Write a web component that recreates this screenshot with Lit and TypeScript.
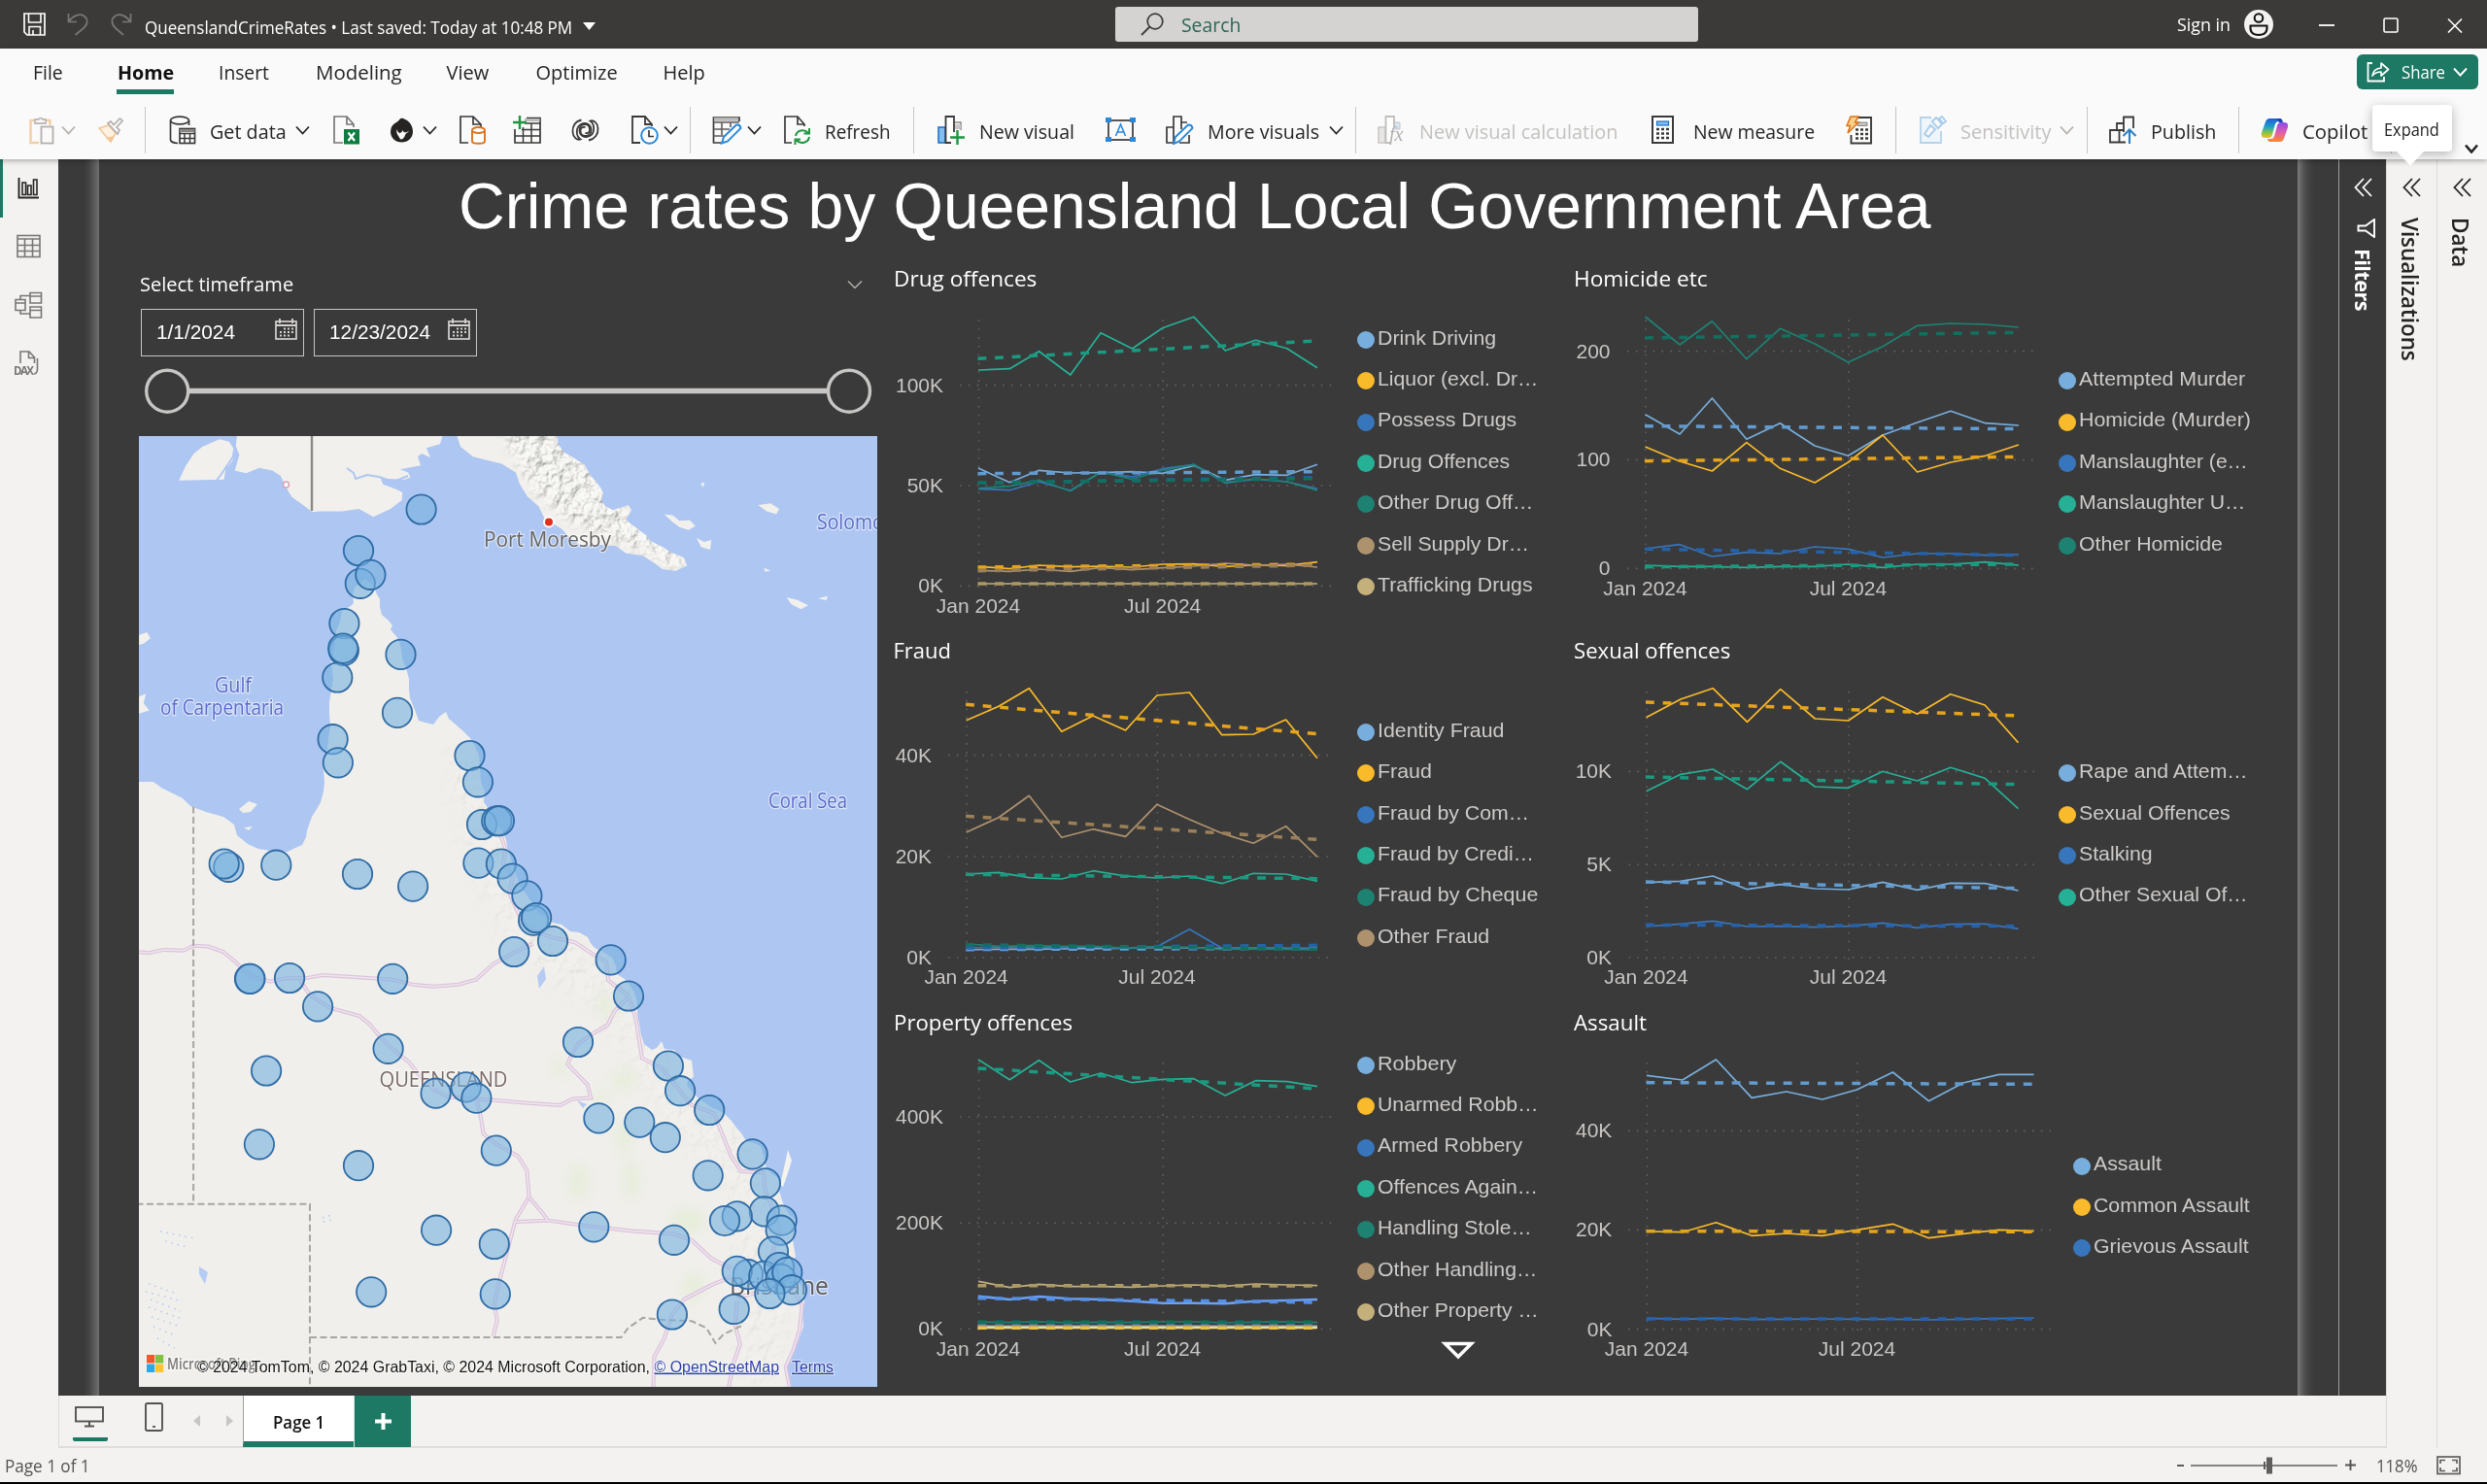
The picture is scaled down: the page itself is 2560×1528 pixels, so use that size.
import { LitElement, html, css, svg, nothing } from "lit";
import { customElement, property } from "lit/decorators.js";

/* One line of text condensed or widened to a set width. */
@customElement("fit-text")
class FitText extends LitElement {
  @property({ type: Number }) w = 0;
  @property() text = "";
  static styles = css`
    :host { display: inline-block; white-space: nowrap; }
    .inner { display: inline-block; transform-origin: 0 50%; }
  `;
  updated() {
    const el = this.renderRoot.querySelector(".inner") as HTMLElement;
    el.style.transform = "none";
    const n = el.offsetWidth;
    if (n && this.w) {
      this.style.width = this.w + "px";
      el.style.transform = `scaleX(${this.w / n})`;
    }
  }
  render() {
    return html`<span class="inner">${this.text}</span>`;
  }
}

const t = (text: string, w: number, cls = "") => html`<fit-text class=${cls} .w=${w} text=${text}></fit-text>`;
const ic = (w: number, h: number, body: unknown, cls = "ic") =>
  html`<svg class=${cls} width=${w} height=${h} viewBox="0 0 ${w} ${h}" fill="none">${body}</svg>`;

/* ---------- icons ---------- */
const K = "#3b3a39";
const chev = (c = "#252423", w = 15, sw = 1.8) =>
  ic(w, 10, svg`<path d="M1 1.5L${w / 2} 8.5L${w - 1} 1.5" stroke=${c} stroke-width=${sw}/>`);
const sep = html`<span class="sep"></span>`;
const docPath = "M9 28H1V1H14L22 9V12M14 1V9H22";

const icons = {
  paste: ic(27, 30, svg`<path d="M6 5H1.5V28H10M17 5h4.500v5" stroke="#f3cfa6" stroke-width="2.500"/><path d="M6 8V4h3.500a2.500 2.500 0 0 1 4.500 0H17v4Z" stroke="#bebbb8" stroke-width="1.800"/><rect x="12.500" y="11.500" width="12" height="17" stroke="#b3b0ad" stroke-width="1.800"/>`),
  brush: ic(27, 27, svg`<path d="M2 11L12 8 19 16 14 25Z" fill="#fdf1e2" stroke="#f1c797" stroke-width="1.600"/><path d="M9 21L14 25 17 19Z" fill="#f5c791"/><path d="M11 6L21 17 23 13 20 10 26 3.500 23.500 1 17 7.500 14 4Z" fill="#fafafa" stroke="#b3b0ad" stroke-width="1.700"/>`),
  getData: ic(28, 30, svg`<ellipse cx="11" cy="5" rx="9.500" ry="3.800" stroke=${K} stroke-width="1.700"/><path d="M1.500 5V25Q2 28 9 28.500M20.500 5V10" stroke=${K} stroke-width="1.700"/><rect x="11" y="13.500" width="15.500" height="15" fill="#fff" stroke=${K} stroke-width="1.700"/><path d="M11 15.500H26.500" stroke="#8a8886" stroke-width="3"/><path d="M11 18.500H26.500M11 23.500H26.500M16 18.500V28.500M21.500 18.500V28.500" stroke=${K} stroke-width="1.500"/>`),
  excel: ic(28, 30, svg`<path d="M10 28H1V1H14L21 9V12M14 1V9H21" stroke="#7a7876" stroke-width="1.700"/><rect x="11" y="14" width="16" height="15.500" fill="#107c41"/><path d="M15.500 17.500L22 26M22 17.500L15.500 26" stroke="#fff" stroke-width="2.200"/>`),
  lake: ic(25, 26, svg`<path d="M14 1C10 0 11 3 7 5Q1 8 1 14.500C1 21 6 25.500 12.500 25.500S24 21 24 14.500C24 8 20 3 14 1Z" fill="#252423"/><path d="M7.500 12C6.500 17 9 18 10.500 21.500 11.500 24 15 22 16 18 17 15.500 19 16 20 13.500 18 16 14 16 13.500 13 11.500 18 8.500 16 7.500 12Z" fill="#fafafa"/>`),
  sql: ic(28, 30, svg`<path d=${docPath} stroke=${K} stroke-width="1.700"/><path d="M13 15V26.500C13 29.500 26 29.500 26 26.500V15" fill="#fff" stroke="#d8731f" stroke-width="1.900"/><ellipse cx="19.500" cy="15" rx="6.500" ry="3" fill="#fff" stroke="#d8731f" stroke-width="1.900"/>`),
  table: ic(30, 30, svg`<path d="M14 2.500H28V28H2V14" stroke=${K} stroke-width="1.700"/><path d="M12 4.500H27.500" stroke="#bdbbb9" stroke-width="3"/><path d="M12 8H28M9 14.500H28M2 21H28M10.500 12V28M19 8V28" stroke=${K} stroke-width="1.500"/><path d="M7 0V14M0 7H14" stroke="#1d9641" stroke-width="2.400"/>`),
  dataverse: ic(29, 24, svg`<path d="M10.500 1.500C4 3 1 8 1.500 14S6 22.500 9.500 21.500C4.500 18 4.500 9 10 6 15 3.500 20.500 6 20.500 12 20.500 16 17.500 18 14.500 18S9.500 15.500 9.500 12.500 11.500 8.500 14.500 9" stroke=${K} stroke-width="1.800"/><path d="M18 22.500C24.500 21 28 16 27.500 10S23 1.500 19.500 2.500C24.500 6 24.500 15 19 18 14 20.500 8.500 18 8.500 12 8.500 8 11.500 6 14.500 6S19 8.500 19 11.500 17.500 15.500 14.500 15" stroke=${K} stroke-width="1.800"/>`),
  recent: ic(28, 30, svg`<path d="M9 28H1V1H14L21 9V11M14 1V9H21" stroke=${K} stroke-width="1.800"/><circle cx="18.500" cy="20.500" r="8.300" fill="#fff" stroke="#2b88d8" stroke-width="2"/><path d="M18 15V21.500H23" stroke=${K} stroke-width="1.700"/>`),
  transform: ic(31, 30, svg`<path d="M28 6V2H1.500V28H9" stroke=${K} stroke-width="1.700"/><path d="M2 4H27" stroke="#bdbbb9" stroke-width="3.600"/><path d="M1.500 7H28M1.500 14H18M1.500 21H12M10 7V20M19 7V12" stroke="#605e5c" stroke-width="1.600"/><path d="M10 28.500L12 22 25 9.500Q29 9 29.500 13L16 26.500Z" fill="#fff" stroke="#2b88d8" stroke-width="2"/>`),
  refresh: ic(28, 30, svg`<path d="M8 28H1V1H14L21 9V11M14 1V9H21" stroke=${K} stroke-width="1.700"/><path d="M12 21C13 15 21 13.500 25 18M26 13V18.500H20.500M26 22C25 28 17 30 13 25.500M11.500 30V24.500H17" stroke="#1d9641" stroke-width="2"/>`),
  newVisual: ic(29, 30, svg`<rect x="1" y="12" width="7" height="16" fill="#83beec" stroke="#1b6ec2" stroke-width="1.500"/><path d="M18 7H24V15" stroke="#8a8886" stroke-width="1.500"/><path d="M18 9h6v5H18Z" fill="#c8c6c4"/><path d="M17 17V1H8.500V28H14" fill="#fff" stroke=${K} stroke-width="1.800"/><path d="M20.500 15V30M13 22.500H28" stroke="#1d9641" stroke-width="2.400"/>`),
  textBox: ic(31, 26, svg`<rect x="3" y="3" width="25" height="20" stroke=${K} stroke-width="1.700"/><path d="M0 0h6v5H0ZM25 0h6v5H25ZM0 20h6v5H0ZM25 20h6v5H25Z" fill="#2b88d8"/><path d="M10.500 19L15.500 7 20.500 19M12.500 15H18.500" stroke="#2b88d8" stroke-width="1.600"/>`),
  moreVisuals: ic(30, 30, svg`<path d="M8 12H1V28H8M8 28V1H16V14M16 7H22M24 20V28H14" stroke=${K} stroke-width="1.700"/><path d="M8 29L10 22 23 9.500Q27 9.500 27.500 13L14 26.500Z" fill="#fff" stroke="#2b88d8" stroke-width="2"/>`),
  calcVisual: ic(28, 30, svg`<rect x="1" y="12" width="7" height="16" fill="#e8e6e4" stroke="#c8c6c4" stroke-width="1.500"/><path d="M17 7H23V14H17Z" fill="#d3e6f6" stroke="#c8c6c4"/><path d="M17 12V1H8.500V28H13" fill="#fff" stroke="#c0bebb" stroke-width="1.800"/><text x="12" y="26" font-family="Liberation Serif, serif" font-style="italic" font-size="20" fill="#b3b0ad">fx</text>`),
  calc: ic(23, 30, svg`<rect x="1" y="1" width="21" height="27" fill="#fff" stroke=${K} stroke-width="2"/><rect x="5.500" y="6" width="12" height="4" fill="#83beec" stroke="#1b6ec2" stroke-width="1.200"/><path d="M5 14h3M10 14h3M15 14h3M5 18.500h3M10 18.500h3M15 18.500h3M5 23h3M10 23h3M15 23h3" stroke=${K} stroke-width="2.600"/>`),
  quick: ic(28, 30, svg`<path d="M12 2H26V28.500H5.500V20" fill="#fff" stroke=${K} stroke-width="1.900"/><path d="M12 7h10v3.500H12Z" fill="#c8c6c4" stroke="#8a8886"/><path d="M10 14.500h3M15 14.500h3M20 14.500h3M10 19h3M15 19h3M20 19h3M10 23.500h3M15 23.500h3M20 23.500h3" stroke=${K} stroke-width="2.600"/><path d="M5 1H13L9.500 7H13L2 18 4.500 10.500H1Z" fill="#fbd18a" stroke="#d8731f" stroke-width="1.500"/>`),
  sens: ic(28, 30, svg`<path d="M12 2H1V28H22V16" fill="#eef5fb" stroke="#b5d3ea" stroke-width="1.800"/><path d="M5 19L11 10 16 14 9 22ZM13 6L17 2 23 9 19 13ZM20 3L23 1 27 6 24 8Z" fill="#fafafa" stroke="#a9cdea" stroke-width="1.900"/>`),
  publish: ic(29, 30, svg`<path d="M8 15V8H15M15 12V1.500H25V13M8 15H1V27.500H17M8 15H15M15 8V17M10.500 15V27.500M1 15V27" stroke=${K} stroke-width="1.800"/><path d="M21 29V15M14.500 21L21 14.500 27.500 21" stroke="#2b7fc4" stroke-width="2.100"/>`),
  share: ic(24, 24, svg`<path d="M6 3H1.500V21.500H18V17" stroke="#fff" stroke-width="1.800"/><path d="M6 16Q7 8.500 15 8V3L22.500 9.500 15 16V12Q9 12 6 16Z" stroke="#fff" stroke-width="1.700" stroke-linejoin="round"/>`),
};
const copilot = html`<svg class="ic" width="29" height="26" viewBox="0 0 29 26">
  <defs>
    <linearGradient id="ca" x1="0" y1="0" x2="0" y2="1"><stop offset="0" stop-color="#1f5bd8"/><stop offset=".45" stop-color="#1fa3c9"/><stop offset=".75" stop-color="#8fc53a"/><stop offset="1" stop-color="#f6c21c"/></linearGradient>
    <linearGradient id="cb" x1="0" y1="0" x2="0" y2="1"><stop offset="0" stop-color="#8a4bea"/><stop offset=".5" stop-color="#e05bb0"/><stop offset="1" stop-color="#fb8a2c"/></linearGradient>
  </defs>
  <path d="M20 1H9.500Q6 1 5 4.500L1.200 15Q-.5 21 5 21H8.500Q11 21 12 17.500L15 6.500Q16 4 18 4H22Q21.500 1 20 1Z" fill="url(#ca)"/>
  <path d="M9 25H19.500Q23 25 24 21.500L27.700 11Q29.500 5 24 5H20.500Q18 5 17 8.500L14 19.500Q13 22 11 22H7Q7.500 25 9 25Z" fill="url(#cb)"/>
  <path d="M16 1H20Q22 1 23 5H19Z" fill="#1b46b8"/></svg>`;

const dbl = (c: string) => ic(20, 20, svg`<path d="M10 1L1.500 10 10 19M18 1L9.500 10 18 19" stroke=${c} stroke-width="1.800"/>`);
const calendar = ic(23, 22, svg`<rect x="1" y="3" width="21" height="18" stroke="#d5d3d1" stroke-width="1.700"/><path d="M5 0V5M18 0V5M1 7H22" stroke="#d5d3d1" stroke-width="1.900"/><path d="M9 10.500h2M13 10.500h2M17 10.500h2M5 14h2M9 14h2M13 14h2M17 14h2M5 17.500h2M9 17.500h2M13 17.500h2" stroke="#d5d3d1" stroke-width="2"/>`);

/* ---------- chart data ---------- */
const C = { light: "#78aedd", yellow: "#f9ba2b", blue: "#3776bd", teal: "#26b196", dteal: "#1d8272", tan: "#ae926e", khaki: "#c4b07b", bright: "#6ba0f5", gold: "#f7d97a" };
const D: Record<string, string> = { [C.light]: "#629bd0", [C.yellow]: "#e6a41c", [C.blue]: "#2562ab", [C.teal]: "#1a9a80", [C.dteal]: "#12705f", [C.tan]: "#9b7f58", [C.khaki]: "#ad9a62", [C.bright]: "#5590e6", [C.gold]: "#e9c24e" };
type Series = { c: string; v: number[] | number; tr: [number, number]; lw?: number };
interface ChartSpec {
  title: string; tw: number; ox: number; oy: number; pw: number; base: number;
  x0: number; x1: number; gx: [number, number]; rows: [number, string][]; lx: number;
  v: [number, number]; xl: number; series: Series[]; legend: [string, string, number][]; more?: boolean;
}
const DAYS = [0, 31, 60, 91, 121, 152, 182, 213, 244, 274, 305, 335];

const charts: ChartSpec[] = [
  { title: "Drug offences", tw: 147, ox: 919, oy: 308, pw: 478, base: 250, x0: 1007, x1: 1356, gx: [988, 1371], lx: 971,
    rows: [[440, "100K"], [750, "50K"], [1060, "0K"]], v: [238, 1065], xl: 630.5,
    series: [
      { c: C.light, v: [696, 740, 703, 711, 710, 707, 712, 688, 733, 716, 718, 685], tr: [713, 707] },
      { c: C.yellow, v: [1000, 1007, 996, 1001, 999, 1002, 993, 992, 1000, 995, 997, 986], tr: [1002, 993] },
      { c: C.blue, v: [760, 764, 738, 765, 709, 723, 698, 685, 742, 730, 738, 760], tr: [742, 725] },
      { c: C.teal, v: [393, 389, 335, 408, 278, 327, 263, 229, 333, 301, 326, 386], tr: [358, 303] },
      { c: C.dteal, v: [758, 752, 733, 767, 708, 730, 703, 685, 740, 729, 738, 765], tr: [741, 728] },
      { c: C.tan, v: [1012, 1015, 1008, 1015, 1003, 1010, 1004, 999, 990, 996, 993, 1002], tr: [1013, 996] },
      { c: C.khaki, v: 1053, tr: [1053, 1053] },
    ],
    legend: [["Drink Driving", C.light, 122], ["Liquor (excl. Dr…", C.yellow, 165], ["Possess Drugs", C.blue, 143], ["Drug Offences", C.teal, 136], ["Other Drug Off…", C.dteal, 160], ["Sell Supply Dr…", C.tan, 156], ["Trafficking Drugs", C.khaki, 160]] },
  { title: "Homicide etc", tw: 138, ox: 1619, oy: 308, pw: 500, base: 250, x0: 1693.5, x1: 2078, gx: [1675, 2093], lx: 1657.5,
    rows: [[335, "200"], [670, "100"], [1006, "0"]], v: [238, 1010], xl: 613,
    series: [
      { c: C.light, v: [530, 591, 480, 607, 557, 627, 658, 594, 555, 520, 557, 564], tr: [566, 575] },
      { c: C.yellow, v: [630, 675, 705, 617, 697, 741, 678, 594, 708, 678, 658, 624], tr: [674, 661] },
      { c: C.blue, v: [945, 932, 969, 956, 960, 939, 946, 972, 960, 960, 965, 963], tr: [946, 965] },
      { c: C.teal, v: [996, 1000, 1000, 1003, 1000, 1000, 993, 1003, 993, 993, 986, 996], tr: [1001, 993] },
      { c: C.dteal, v: [228, 315, 242, 359, 265, 312, 369, 320, 256, 249, 252, 261], tr: [294, 277] },
    ],
    legend: [["Attempted Murder", C.light, 171], ["Homicide (Murder)", C.yellow, 177], ["Manslaughter (e…", C.blue, 174], ["Manslaughter U…", C.teal, 171], ["Other Homicide", C.dteal, 148]] },
  { title: "Fraud", tw: 60, ox: 919, oy: 691, pw: 478, base: 640, x0: 994.6, x1: 1356, gx: [976, 1367], lx: 959,
    rows: [[413, "40K"], [726, "20K"], [1038, "0K"]], v: [216, 1043], xl: 1012.7,
    series: [
      { c: C.light, v: [1014, 1012, 1012, 1011, 1010, 1009, 1006, 1008, 1010, 1009, 1010, 1012], tr: [1013, 1009] },
      { c: C.yellow, v: [305, 262, 206, 340, 291, 336, 228, 219, 350, 348, 303, 422], tr: [256, 347] },
      { c: C.blue, v: [1008, 1005, 1006, 1006, 1005, 1010, 1004, 950, 1009, 1008, 1009, 1008], tr: [1008, 1000] },
      { c: C.teal, v: [780, 775, 791, 795, 770, 786, 792, 786, 809, 778, 780, 802], tr: [781, 794] },
      { c: C.dteal, v: [996, 1003, 1001, 1003, 1003, 1008, 1004, 1006, 1013, 1010, 1012, 1014], tr: [998, 1012] },
      { c: C.tan, v: [651, 605, 538, 667, 641, 664, 565, 611, 654, 685, 632, 727], tr: [601, 673] },
    ],
    legend: [["Identity Fraud", C.light, 130], ["Fraud", C.yellow, 56], ["Fraud by Com…", C.blue, 156], ["Fraud by Credi…", C.teal, 161], ["Fraud by Cheque", C.dteal, 165], ["Other Fraud", C.tan, 115]] },
  { title: "Sexual offences", tw: 161, ox: 1619, oy: 691, pw: 500, base: 640, x0: 1694.5, x1: 2077.5, gx: [1676.6, 2094], lx: 1659,
    rows: [[463, "10K"], [751, "5K"], [1038, "0K"]], v: [216, 1043], xl: 1012.7,
    series: [
      { c: C.light, v: [806, 802, 786, 827, 812, 825, 828, 805, 829, 808, 809, 831], tr: [804, 824] },
      { c: C.yellow, v: [296, 240, 206, 310, 209, 300, 306, 233, 286, 224, 258, 374], tr: [249, 291] },
      { c: C.blue, v: [942, 934, 925, 942, 941, 944, 941, 931, 946, 935, 934, 949], tr: [937, 941] },
      { c: C.teal, v: [524, 472, 456, 518, 433, 510, 514, 463, 492, 451, 484, 578], tr: [480, 503] },
    ],
    legend: [["Rape and Attem…", C.light, 174], ["Sexual Offences", C.yellow, 156], ["Stalking", C.blue, 76], ["Other Sexual Of…", C.teal, 174]] },
  { title: "Property offences", tw: 184, ox: 919, oy: 1074, pw: 478, base: 1020, x0: 1007, x1: 1356, gx: [988, 1371], lx: 971, more: true,
    rows: [[390, "400K"], [718, "200K"], [1045, "0K"]], v: [222, 1050], xl: 1396,
    series: [
      { c: C.light, v: 1036, tr: [1036, 1036] },
      { c: C.tan, v: 1040, tr: [1039, 1039] },
      { c: C.teal, v: [213, 275, 215, 282, 255, 284, 274, 272, 324, 278, 281, 296], tr: [240, 303] },
      { c: C.dteal, v: [1024, 1025, 1023, 1026, 1024, 1025, 1023, 1023, 1026, 1024, 1023, 1025], tr: [1024, 1024] },
      { c: C.khaki, v: [898, 917, 907, 914, 914, 916, 912, 909, 913, 906, 909, 911], tr: [911, 912] },
      { c: C.bright, v: [944, 954, 945, 952, 954, 959, 965, 965, 967, 959, 957, 954], tr: [950, 963], lw: 2.6 },
      { c: C.gold, v: 1041, tr: [1042, 1042], lw: 2.6 },
    ],
    legend: [["Robbery", C.light, 81], ["Unarmed Robb…", C.yellow, 165], ["Armed Robbery", C.blue, 149], ["Offences Again…", C.teal, 165], ["Handling Stole…", C.dteal, 159], ["Other Handling…", C.tan, 164], ["Other Property …", C.khaki, 166]] },
  { title: "Assault", tw: 75, ox: 1619, oy: 1074, pw: 515, base: 1020, x0: 1695, x1: 2093.5, gx: [1676, 2111], lx: 1659.4,
    rows: [[433, "40K"], [739, "20K"], [1046, "0K"]], v: [222, 1050], xl: 1396,
    series: [
      { c: C.light, v: [262, 276, 213, 331, 312, 336, 306, 252, 341, 285, 259, 259], tr: [284, 289] },
      { c: C.yellow, v: [744, 746, 716, 757, 750, 757, 739, 721, 764, 751, 739, 743], tr: [743, 745] },
      { c: C.blue, v: [1012, 1015, 1012, 1016, 1015, 1014, 1015, 1015, 1017, 1015, 1013, 1011], tr: [1014, 1014] },
    ],
    legend: [["Assault", C.light, 70], ["Common Assault", C.yellow, 161], ["Grievous Assault", C.blue, 160]] },
];

@customElement("line-chart")
class LineChart extends LitElement {
  @property({ attribute: false }) spec!: ChartSpec;
  static styles = css`
    :host { display: block; height: 383px; color: #fff; }
    .title { height: 38px; padding-left: 0.5px; font: 22px/33px "Open Sans", "Noto Sans", sans-serif; }
    .body { display: flex; height: 338px; }
    .plot { display: block; flex: none; overflow: visible; }
    .tick { font-family: "Liberation Sans", Arial, sans-serif; font-size: 21px; fill: #c8c6c4; }
    .legend { display: flex; flex-direction: column; justify-content: center; font: 21px/38px "Liberation Sans", Arial, sans-serif; color: #cdcbc9; }
    .row { display: flex; align-items: flex-start; height: 42.4px; gap: 3px; }
    .dot { width: 18px; height: 18px; border-radius: 50%; margin-top: 12.2px; }
    .more { height: 38px; padding-left: 86px; }
  `;
  render() {
    const s = this.spec;
    const Y = (v: number) => s.base + v / 3;
    const X = (i: number) => s.x0 + ((s.x1 - s.x0) * DAYS[i]) / 335;
    return html`
      <div class="title">${t(s.title, s.tw)}</div>
      <div class="body">
        <svg class="plot" width=${s.pw} height="338" viewBox="${s.ox} ${s.oy} ${s.pw} 338" fill="none">
          <g stroke="#636261" stroke-width="1.600" stroke-dasharray="1.600 7.250">
            ${s.rows.map(([y]) => svg`<path d="M${s.gx[0]} ${Y(y)}H${s.gx[1]}"/>`)}
            ${[0, 6].map((i) => svg`<path d="M${X(i) + 0.5} ${Y(s.v[0])}V${Y(s.v[1])}"/>`)}
          </g>
          ${s.rows.map(([y, l]) => svg`<text class="tick" text-anchor="end" x=${s.lx} y=${Y(y) + 7}>${l}</text>`)}
          <text class="tick" text-anchor="middle" x=${X(0)} y=${s.xl}>Jan 2024</text>
          <text class="tick" text-anchor="middle" x=${X(6)} y=${s.xl}>Jul 2024</text>
          ${s.series.map((r) => {
            const pts = DAYS.map((_, i) => `${X(i).toFixed(1)},${Y(typeof r.v === "number" ? r.v : r.v[i]).toFixed(1)}`).join(" ");
            return svg`<polyline points=${pts} stroke=${r.c} stroke-width=${r.lw ?? 1.7} stroke-linejoin="round"/>`;
          })}
          ${s.series.map((r) => svg`<path d="M${s.x0 - 0.5} ${Y(r.tr[0])}L${s.x1} ${Y(r.tr[1])}" stroke=${D[r.c]} stroke-width="3.500" stroke-dasharray="8.800 8.850"/>`)}
        </svg>
        <div class="legend">
          ${s.legend.map(([l, c, w]) => html`<div class="row"><span class="dot" style="background:${c}"></span>${t(l, w)}</div>`)}
          ${s.more ? html`<div class="more">${ic(36, 30, svg`<path d="M4.500 11.500H31.500L18 25Z" stroke="#fff" stroke-width="3.500"/>`)}</div>` : nothing}
        </div>
      </div>`;
  }
}

/* ---------- map ---------- */
const BUBBLES: [number, number][] = [
  [433.6, 524.5], [369, 567], [370.8, 600.8], [381.4, 591.8], [354.4, 642], [353.8, 669.8], [353.2, 667.6], [347.3, 697.5], [412.5, 673.9], [409, 733.9],
  [342.6, 761.2], [347.9, 785.3], [483.5, 778], [491.9, 805.3], [496, 849], [511.3, 845.2], [513.9, 845.2], [235.3, 892.8], [230.7, 889.5], [284.3, 890.7],
  [368, 900], [425.1, 912.6], [492.4, 888.6], [515.9, 889.5], [527.6, 904.6], [542.4, 922.3], [549.1, 947.6], [552.1, 945], [569, 969], [529.2, 980],
  [628.7, 988.4], [647, 1025.5], [257, 1007.8], [257.4, 1007.8], [298.1, 1007], [404.2, 1007.8], [327.1, 1036.4], [595, 1073], [399.6, 1079.8], [274.1, 1102.5],
  [448.6, 1125.7], [479.7, 1119.4], [490.4, 1130.7], [687.9, 1097.5], [700.1, 1123.2], [730.2, 1143], [616.4, 1151.4], [658.3, 1155.6], [684.8, 1171.2], [266.9, 1178.3],
  [369, 1200.2], [510.8, 1184.6], [774.6, 1188.4], [728.7, 1210.3], [787.9, 1218.3], [786.8, 1247.4], [758.8, 1252.4], [746, 1257], [804.7, 1256.6], [803.7, 1266.7],
  [449.1, 1266.7], [508.8, 1281], [611.3, 1263.4], [694, 1276.8], [796, 1288.6], [770, 1312.2], [758.8, 1308.8], [786.3, 1313.9], [802.1, 1305], [803.7, 1316.8],
  [810.3, 1310.1], [814.9, 1328.2], [792.4, 1332], [382.2, 1330.3], [509.8, 1332.4], [691.9, 1353.5], [755.7, 1348],
];
const COAST =
  "M143 1428V805L158 805 166 811 176 816 188 822 196 830 212 836 230 841 241 849 244 860 255 869 266 874 278 876 296 877 304 873 311 870 315 862 316 855 321 841 326 833 330 826 333 815 334 805 333 792 333 784 337 772 338 760 340 748 339 735 339 723 341 711 343 699 341 682 344 665 346 650 350 640 352 629 361 624 364 621 363 612 365 605 376 596 384 603 388 612 391 617 391 625 393 633 400 639 404 644 402 648 405 652 408 655 411 660 413 669 414 678 418 688 421 699 421 709 422 719 427 731 431 742 438 744 446 746 452 738 459 733 462 740 469 746 476 752 484 760 489 768 493 778 494 792 495 805 499 815 498 826 505 836 510 848 517 855 521 865 523 877 526 884 528 893 533 906 537 914 543 923 549 931 554 940 562 944 569 950 578 952 587 959 596 960 605 965 608 971 612 976 621 980 630 986 634 994 635 1003 643 1008 648 1014 653 1022 656 1033 656 1044 658 1054 660 1066 663 1075 671 1081 676 1079 681 1072 684 1080 694 1081 700 1088 712 1092 713 1100 714 1109 708 1112 707 1117 712 1124 719 1131 732 1140 745 1146 752 1153 758 1161 764 1168 768 1175 776 1177 783 1180 786 1190 788 1201 794 1208 801 1213 802 1226 806 1239 812 1250 819 1256 817 1266 816 1277 819 1294 814 1300 816 1306 821 1318 827 1328 828 1340 826 1352 827 1366 823 1377 819 1387 813 1398 809 1408 810 1418 813 1428Z";
const PNG_MTN = "M800 700L808 735 830 760 880 778 905 800 912 830 925 860 945 885 955 915 985 942 1000 965 1022 985 1045 982 1080 985 1098 1003 1128 1010 1150 1030 1162 1044 1185 1048 1205 1035 1200 1015 1175 1000 1165 990 1140 972 1135 960 1112 935 1098 920 1108 895 1102 882 1075 895 1062 885 1055 870 1058 850 1052 835 1035 805 1025 780 1005 762 990 750 980 730 975 700Z";
const PNG_WEST = "M412 700L414 735 420 755 412 795 432 802 455 788 478 795 492 808 502 838 512 862 530 880 548 900 560 898 600 898 630 892 655 912 685 892 705 870 706 850 695 842 672 830 668 815 710 818 720 812 716 800 702 792 738 782 733 760 740 752 755 762 748 738 772 728 778 700Z";

const road = (d: string) => svg`<path d=${d} stroke="#dbc4dc" stroke-width="4"/><path d=${d} stroke="#f1e6ee" stroke-width="1.500"/>`;
const ROADS = [
  "M40 475L65 478 95 470 135 472 155 460 185 462 215 475 240 500 270 535 310 548 340 540 380 540 415 532 480 537 557 543 600 556 640 560 690 555 725 543 760 505 800 478 840 455",
  "M370 545L390 580 430 612 490 632 510 652 530 680 552 708 590 745 610 775 640 812 670 830 726 835 760 838 830 845 895 850 920 835 957 832 950 800 930 775 910 750 915 735 931 700 965 672 990 655 1005 620 1033 585",
  "M775 190L785 225 780 260 800 290 792 330 810 380 830 420 880 440 925 452 960 480 988 500 992 545 1033 583 1048 640 1060 735 1100 760 1137 815 1160 850 1205 870 1225 930 1240 975 1260 1012 1305 1015 1309 1060 1325 1110 1338 1160 1320 1220 1335 1260",
  "M726 835L735 880 740 920 766 945 810 975 828 1010 832 1075 805 1130 790 1200 770 1290 762 1340 768 1375 760 1415",
  "M832 1075L860 1115 870 1132 805 1135M870 1132L960 1147 1040 1158 1125 1165 1160 1180 1200 1225 1240 1250",
  "M1240 1270L1200 1290 1145 1325 1121 1362 1105 1420 1085 1465 1083 1540M1252 1330L1248 1390 1258 1435 1245 1480 1235 1540M1290 1310L1252 1320",
  "M1365 1300L1383 1340 1378 1400 1365 1450 1350 1490 1358 1540",
];
const label = (s: string, x: number, y: number, w: number, fs: number, fill: string) =>
  svg`<text class="lbl" x=${x} y=${y} font-size=${fs} fill=${fill} textLength=${w} lengthAdjust="spacingAndGlyphs">${s}</text>`;

@customElement("bubble-map")
class BubbleMap extends LitElement {
  static styles = css`
    :host { display: block; width: 760px; height: 979px; overflow: hidden; }
    .map { display: block; }
    .lbl { font-family: "Open Sans", "Noto Sans", sans-serif; paint-order: stroke; stroke: rgba(255, 255, 255, 0.55); stroke-width: 2.5px; }
    .ar { font-family: "Liberation Sans", Arial, sans-serif; font-size: 16.5px; paint-order: stroke; stroke: rgba(255, 255, 255, 0.6); stroke-width: 2px; }
    .u { text-decoration: underline; fill: #2c3fa5; }
    .ns * { vector-effect: non-scaling-stroke; }
    .mtn { mix-blend-mode: multiply; }
  `;
  render() {
    return html`<svg class="map" width="760" height="979" viewBox="143 449 760 979" fill="none">
      <defs>
        <filter id="hill" x="0" y="0" width="100%" height="100%">
          <feTurbulence type="fractalNoise" baseFrequency=".09" numOctaves="3" seed="4"/>
          <feDiffuseLighting surfaceScale="7" diffuseConstant="1.130" lighting-color="#f8f7f4"><feDistantLight azimuth="225" elevation="64"/></feDiffuseLighting>
        </filter>
        <filter id="soft"><feGaussianBlur stdDeviation="6"/></filter>
        <filter id="soft2"><feGaussianBlur stdDeviation="14"/></filter>
        <clipPath id="pngc"><path d=${PNG_MTN} transform="translate(0 160) scale(.58673 .40816)"/></clipPath>
        <clipPath id="auc"><path d=${COAST}/></clipPath>
        <mask id="mm"><path d="M515 440L545 500 575 530 640 560 705 590 700 565 640 520 610 480 580 440Z" fill="#fff" filter="url(#soft)"/></mask>
        <mask id="me"><path d="M480 770L500 860 540 960 640 1030 690 1120 770 1220 790 1330 780 1428" stroke="#fff" stroke-width="50" filter="url(#soft2)"/></mask>
      </defs>
      <rect x="143" y="449" width="760" height="979" fill="#aec6f2"/>
      <g fill="#f1f0ec" transform="translate(0 160) scale(.58673 .40816)">
        <path d=${PNG_WEST}/><path d=${PNG_MTN}/>
        <path d="M314 820L325 785 340 752 355 735 385 716 402 722 412 745 408 770 396 792 393 818Z"/>
        <path d="M1165 905L1180 908 1192 922 1210 920 1220 935 1208 945 1192 938 1180 925ZM1222 965L1235 975 1248 970 1246 995 1230 988ZM1330 882L1352 878 1367 892 1362 905 1345 898ZM1380 1115L1400 1122 1418 1135 1405 1145 1388 1132ZM1435 1118L1452 1112 1450 1122ZM1340 1040L1352 1048 1342 1050ZM1229 828L1236 824 1234 838ZM244 1210L258 1203 264 1218 252 1232 244 1235ZM244 1365L256 1358 252 1382 262 1400 244 1408Z"/>
      </g>
      <g stroke="#aec6f2" stroke-width="2"><path d="M357 482L364 487 366 493 378 489 390 491 405 496 420 490M243 449L240 470 228 488 222 496M232 480L242 489"/></g>
      <path d=${COAST} fill="#f0efeb"/>
      <path d="M811 1184L815 1195 811 1208 806 1222 803 1220 808 1198Z" fill="#f4f3ef"/>
      <path d="M246 833L256 825 265 828 258 836 250 837ZM251 852L260 851 256 855Z" fill="#f0efeb"/>
      <g clip-path="url(#pngc)"><g mask="url(#mm)"><rect class="mtn" x="480" y="440" width="250" height="170" filter="url(#hill)" opacity=".6"/></g></g>
      <g clip-path="url(#auc)"><g mask="url(#me)"><rect class="mtn" x="440" y="760" width="400" height="668" filter="url(#hill)" opacity=".09"/></g>
        <g fill="#e0ecce" filter="url(#soft)" opacity=".55"><ellipse cx="595" cy="1217" rx="9" ry="18"/><ellipse cx="650" cy="1215" rx="8" ry="20"/><ellipse cx="708" cy="1258" rx="18" ry="13"/><ellipse cx="714" cy="1325" rx="11" ry="15"/><ellipse cx="577" cy="1098" rx="7" ry="9"/><ellipse cx="642" cy="1112" rx="12" ry="9"/><ellipse cx="642" cy="1170" rx="8" ry="18"/><ellipse cx="620" cy="1130" rx="7" ry="7"/><ellipse cx="625" cy="1035" rx="8" ry="14"/></g>
      </g>
      <g fill="#b6cbf3"><path d="M553 1005L560 995 562 1008 555 1018Z"/><path d="M594 1133L604 1137 600 1141Z"/><path d="M205 1304L214 1310 211 1322 205 1312Z"/></g>
      <g stroke="#b4caf2" stroke-width="1.500" stroke-dasharray="1.500 5"><path d="M153 1322L182 1332M150 1330L188 1340M155 1338L186 1350M153 1346L188 1358M156 1356L186 1366M158 1366L182 1376M162 1378L180 1388M165 1268L200 1275M170 1278L192 1284M332 1254L344 1250M333 1258L342 1256"/></g>
      <g class="ns" transform="translate(120 780) scale(.5102 .42105)">
        ${ROADS.map(road)}
        <path d="M155 120V1090M40 1092H390V1545M390 1418H1018L1032 1395 1062 1370 1100 1375 1160 1378 1190 1395 1208 1432 1225 1410 1260 1390" stroke="#a8a6a3" stroke-width="2" stroke-dasharray="7 3.500"/>
      </g>
      <path d="M321 449V526" stroke="#8b8986" stroke-width="2.400"/>
      <circle cx="294.500" cy="499" r="3" fill="#fff" stroke="#d9a0b5" stroke-width="1.500"/>
      ${label("Port Moresby", 498, 562.5, 131, 21, "#666563")}
      <circle cx="565" cy="537.500" r="5" fill="#e0301e" stroke="#fff" stroke-width="2"/>
      ${label("Gulf", 221, 712.5, 38, 21, "#5b6cc9")}
      ${label("of Carpentaria", 165, 736, 127, 21, "#5b6cc9")}
      ${label("Solomon Sea", 841, 545, 118, 21, "#5b6cc9")}
      ${label("Coral Sea", 791, 832, 81, 21, "#5b6cc9")}
      ${label("QUEENSLAND", 390.5, 1118.5, 132, 21, "#7a6a66")}
      ${label("Brisbane", 751, 1333, 102, 26, "#5c5a58")}
      <g fill="#76b0e0" fill-opacity=".6" stroke="#2f6ca6" stroke-width="1.800">
        ${BUBBLES.map(([x, y]) => svg`<circle cx=${x} cy=${y} r="15.200"/>`)}
      </g>
      <path d="M151 1395h8.200v8.500H151Z" fill="#f1592a"/><path d="M160 1395h8.200v8.500H160Z" fill="#80c342"/><path d="M151 1404.500h8.200v8.500H151Z" fill="#2aa8e8"/><path d="M160 1404.500h8.200v8.500H160Z" fill="#fdc52b"/>
      <text class="lbl" x="172" y="1409.500" font-size="15.500" font-weight="600" fill="#7b7977" textLength="91" lengthAdjust="spacingAndGlyphs">Microsoft Bing</text>
      <text class="ar" x="203" y="1412.500" fill="#111" textLength="466" lengthAdjust="spacingAndGlyphs">© 2024 TomTom, © 2024 GrabTaxi, © 2024 Microsoft Corporation,</text>
      <text class="ar u" x="673.500" y="1412.500" textLength="128.500" lengthAdjust="spacingAndGlyphs">© OpenStreetMap</text>
      <text class="ar u" x="815" y="1412.500" textLength="43" lengthAdjust="spacingAndGlyphs">Terms</text>
    </svg>`;
  }
}

/* ---------- application shell ---------- */
@customElement("app-root")
class AppRoot extends LitElement {
  static styles = css`
    :host { display: flex; flex-direction: column; width: 2560px; height: 1528px; overflow: hidden; background: #f3f2f1; font-family: "Open Sans", "Noto Sans", sans-serif; color: #252423; }
    * { box-sizing: border-box; }
    .ic { display: block; flex: none; }
    .titlebar { height: 50px; background: #3b3a38; color: #fff; display: grid; align-items: center; font-size: 17.5px; line-height: 24px;
      grid-template-columns: 45px 45px 35px 451px 548px 1093px 69px 77px 66px 66px 40px; padding-left: 24px; flex: none; }
    .lift { margin-top: 6px; }
    .dot-menu { margin-top: 3px; }
    .search { width: 600px; height: 36px; background: #d4d3d1; border-radius: 3px; display: flex; align-items: center; gap: 18px; padding-left: 26px; color: #2b6656; font-size: 20px; }
    .search fit-text { margin-top: 2px; }
    .ribbon { height: 114px; background: #fafafa; box-shadow: 0 2px 5px rgba(0, 0, 0, 0.28); z-index: 2; position: relative; flex: none; }
    .tabs { height: 50px; display: grid; font-size: 20px; grid-template-columns: 87px 104px 100px 135px 92px 131px 1744px 140px; padding-left: 33px; }
    .tab { height: 47px; line-height: 50px; }
    .tab fit-text { padding-left: 0.5px; }
    .home { width: 59px; font-weight: 700; border-bottom: 5px solid #1d7864; color: #111; }
    .share { margin-top: 6px; width: 125px; height: 36px; background: #1d7864; border-radius: 6px; color: #fff; display: flex; align-items: center; padding-left: 10px; gap: 12px; font-size: 17.5px; }
    .share .ic:last-child { margin-left: -4px; }
    .tools { height: 64px; margin-top: -1px; padding: 6px 0 0 30px; display: grid; align-items: center; font-size: 20px; line-height: 28px;
      grid-template-columns: 33px 37px 49px 25px 42px 88px 39px 58px 34px 38px 55px 60px 62px 33px 27px 23px 36px 38px 42px 91px 25px 43px 130px 62px 43px 125px 27px 23px 43px 239px 43px 157px 51px 25px 42px 102px 28px 23px 43px 90px 23px 43px 91px 77px 20px; }
    .tools fit-text { margin-top: 3px; }
    .sep { width: 1px; height: 48px; background: #c8c6c4; }
    .off { color: #c3c1bf; }
    .low { margin-top: 37px; margin-left: -1px; }
    .tip { position: absolute; left: 2442px; top: 58px; width: 82px; height: 48px; background: #fff; border-radius: 4px; box-shadow: 0 3px 12px rgba(0, 0, 0, 0.28); font-size: 17.5px; line-height: 50px; padding-left: 12px; color: #201f1e; }
    .tip svg { position: absolute; left: 24px; top: 47px; }
    .main { flex: none; display: flex; height: 1327px; }
    .rail { width: 60px; background: #f3f2f1; display: flex; flex-direction: column; }
    .view { height: 60px; display: flex; align-items: center; padding: 0 0 1px 14px; }
    .sel { border-left: 3px solid #1d7864; padding-left: 15px; }
    .center { width: 2396px; }
    .canvas { height: 1273px; background: #3a3a3a; display: flex; }
    .gl { width: 42px; background: linear-gradient(90deg, #3a3a3a 62%, #444 75%, #6f6f6f 100%); }
    .gr { width: 42px; background: linear-gradient(90deg, #7a7a7a 0, #555 14%, #444 26%, #3a3a3a 42%); }
    .page { width: 2263px; }
    .headline { height: 106px; padding-right: 7px; text-align: center; font: 66.5px/96px "Liberation Sans", Arial, sans-serif; color: #fff; }
    .body { display: flex; padding-left: 41px; gap: 16px; }
    .left { width: 760px; color: #fff; }
    .slhead { display: flex; justify-content: space-between; align-items: center; height: 48px; padding: 0 15px 3px 1px; font-size: 19.5px; }
    .dates { display: flex; gap: 10px; padding-left: 2px; }
    .date { width: 168px; height: 49px; border: 1.5px solid #c8c6c4; display: flex; align-items: center; justify-content: space-between; padding: 0 6px 2px 15px; font: 20.8px/30px "Liberation Sans", Arial, sans-serif; }
    .date .ic { margin-top: -5px; }
    .slider { display: block; height: 82px; }
    .grid { display: grid; grid-template-columns: 700px 700px; grid-auto-rows: 383px; align-content: start; }
    .filters { width: 49px; border-left: 1.5px solid #a19f9d; padding-left: 2px; }
    .vert { display: flex; flex-direction: column; align-items: center; padding-top: 19px; font-size: 22.5px; font-weight: 600; line-height: 30px; }
    .vt { writing-mode: vertical-rl; }
    .vfil { color: #fff; margin-top: 11px; font-size: 21.5px; font-weight: 700; letter-spacing: -0.5px; margin-right: 3px; }
    .fun { margin-top: 22px; margin-left: 5px; }
    .pane { width: 52px; border-left: 1px solid #dddbd9; background: #f3f2f1; color: #252423; }
    .vis { margin-top: 21px; letter-spacing: -0.1px; margin-right: 5px; }
    .pages { height: 54px; display: flex; border-left: 1px solid #dddbd9; border-bottom: 2px solid #dfdddb; }
    .mon { margin: 11px 0 0 14px; width: 36px; height: 36px; border-bottom: 4px solid #1d7864; border-radius: 0 0 2px 2px; }
    .mon .ic { margin-left: 2px; }
    .phone { margin: 7px 0 0 38px; }
    .arrows { display: flex; gap: 27px; margin: 20px 0 0 30px; width: 51px; }
    .ptab { width: 114px; height: 53px; background: #fff; border-left: 1px solid #a19f9d; border-bottom: 6px solid #1d7864; font-size: 17.5px; font-weight: 600; line-height: 54px; padding-left: 30px; color: #111; }
    .plus { width: 59px; height: 53px; background: #1d7864; border-left: 1px solid #d8e8e4; display: flex; align-items: center; justify-content: center; }
    .status { height: 37px; flex: none; border-bottom: 2.5px solid #000; display: grid; grid-template-columns: 2236px 14px 158px 33px 62px 40px; padding-left: 5px; align-items: center; font-size: 17.5px; color: #55534f; }
  `;
  render() {
    const W = "#fff", G = "#797775";
    return html`
      <div class="titlebar">
        ${ic(23, 24, svg`<path d="M1 1H22V23H4L1 20Z" stroke=${W} stroke-width="1.700"/><path d="M5.500 1V10H18V1M6 23V14.500H17.500V23M10 23V18" stroke=${W} stroke-width="1.600"/>`)}
        ${ic(22, 24, svg`<path d="M1.500 1V9.500H10M2 9C6 3 13 .5 17.500 3.500S21.500 12 17 16L8.500 23" stroke=${G} stroke-width="1.700"/>`)}
        ${ic(22, 24, svg`<path d="M20.500 1V9.500H12M20 9C16 3 9 .5 4.500 3.500S.500 12 5 16L13 23" stroke=${G} stroke-width="1.700"/>`)}
        <span class="lift">${t("QueenslandCrimeRates • Last saved: Today at 10:48 PM", 440)}</span>
        ${ic(13, 8, svg`<path d="M0 0H13L6.500 8Z" fill=${W}/>`, "ic dot-menu")}
        <div class="search">${ic(24, 24, svg`<circle cx="15" cy="9" r="7.800" stroke=${K} stroke-width="1.700"/><path d="M9.500 14.500L1 23" stroke=${K} stroke-width="1.800"/>`)}${t("Search", 61)}</div>
        ${t("Sign in", 55)}
        ${ic(30, 30, svg`<circle cx="15" cy="15" r="15" fill="#f3f2f1"/><circle cx="15" cy="8.500" r="4.300" stroke="#111" stroke-width="2"/><path d="M6.500 16.500H23.500Q24.500 26 15 26T6.500 16.500Z" stroke="#111" stroke-width="2"/>`)}
        ${ic(16, 20, svg`<path d="M0 11H16" stroke=${W} stroke-width="1.800"/>`)}
        ${ic(16, 18, svg`<rect x="1" y="3" width="14" height="14" rx="1.500" stroke=${W} stroke-width="1.600"/>`)}
        ${ic(16, 18, svg`<path d="M1 3.500L15 17.500M15 3.500L1 17.500" stroke=${W} stroke-width="1.600"/>`)}
      </div>
      <div class="ribbon">
        <div class="tabs">
          <div class="tab">${t("File", 31)}</div><div class="tab home">${t("Home", 58)}</div><div class="tab">${t("Insert", 52)}</div>
          <div class="tab">${t("Modeling", 89)}</div><div class="tab">${t("View", 44)}</div><div class="tab">${t("Optimize", 84)}</div><div class="tab">${t("Help", 43)}</div>
          <div class="share">${icons.share}${t("Share", 45)}${chev("#fff", 15, 1.9)}</div>
        </div>
        <div class="tools">
          ${icons.paste}${chev("#b3b0ad")}${icons.brush}${sep}
          ${icons.getData}${t("Get data", 79)}${chev()}${icons.excel}${icons.lake}${chev()}${icons.sql}${icons.table}${icons.dataverse}${icons.recent}${chev()}${sep}
          ${icons.transform}${chev()}${icons.refresh}${t("Refresh", 68)}${sep}
          ${icons.newVisual}${t("New visual", 98)}${icons.textBox}${icons.moreVisuals}${t("More visuals", 115)}${chev()}${sep}
          ${icons.calcVisual}${t("New visual calculation", 204, "off")}${icons.calc}${t("New measure", 125)}${icons.quick}${sep}
          ${icons.sens}${t("Sensitivity", 93, "off")}${chev("#b3b0ad")}${sep}
          ${icons.publish}${t("Publish", 67)}${sep}
          ${copilot}${t("Copilot", 67)}${sep}
          <div class="low">${chev("#252423", 14, 2.6)}</div>
        </div>
        <div class="tip">${t("Expand", 57)}<svg width="30" height="16" viewBox="0 0 30 16"><path d="M0 0H30L15 15.500Z" fill="#fff"/></svg></div>
      </div>
      <div class="main">
        <div class="rail">
          <div class="view sel">${ic(22, 22, svg`<path d="M1.500 0V20.500H22" stroke="#252423" stroke-width="1.900"/><path d="M5 5h3.500v12.500H5ZM10.500 8h3.500v9.500h-3.500ZM16.500 2h3.500v15.500h-3.500Z" stroke="#252423" stroke-width="1.600"/>`)}</div>
          <div class="view">${ic(30, 26, svg`<rect x="4" y="1.500" width="23" height="22" stroke="#797775" stroke-width="1.600"/><path d="M4 5H27M4 11.500H27M4 17.500H27M11.500 5V23.500M19.500 5V23.500" stroke="#797775" stroke-width="1.600"/>`)}</div>
          <div class="view">${ic(30, 28, svg`<path d="M2 8.500H12V19.500H2ZM2 12H12M17 1.500H28.500V12H17ZM17 5H28.500M17 16H28.500V27H17ZM17 19.500H28.500M7 8.500V4.500H17M7 19.500V23H17" stroke="#797775" stroke-width="1.600"/>`)}</div>
          <div class="view">${ic(30, 28, svg`<path d="M7 14V2H16L21.500 8V14M15.500 2V8.500H21.500M24.500 9V20Q24.500 24.500 21 25" stroke="#797775" stroke-width="1.600"/><text x="0" y="25.500" font-family="Open Sans, sans-serif" font-size="11.500" font-weight="700" fill="#797775" textLength="21">DAX</text>`)}</div>
        </div>
        <div class="center">
          <div class="canvas">
            <div class="gl"></div>
            <div class="page">
              <div class="headline">${t("Crime rates by Queensland Local Government Area", 1516)}</div>
              <div class="body">
                <div class="left">
                  <div class="slhead">${t("Select timeframe", 158)}${chev("#b3b0ad", 16, 1.5)}</div>
                  <div class="dates"><div class="date"><span>1/1/2024</span>${calendar}</div><div class="date"><span>12/23/2024</span>${calendar}</div></div>
                  <svg class="slider" width="760" height="82" viewBox="143 367 760 82" fill="none" stroke="#c8c6c4"><path d="M194 402.500H852" stroke-width="5.500"/><circle cx="172.200" cy="402.700" r="21.500" stroke-width="3.400"/><circle cx="874" cy="402.700" r="21.500" stroke-width="3.400"/></svg>
                  <bubble-map></bubble-map>
                </div>
                <div class="grid">${charts.map((c) => html`<line-chart .spec=${c}></line-chart>`)}</div>
              </div>
            </div>
            <div class="gr"></div>
            <div class="filters vert">${dbl("#fff")}${ic(20, 20, svg`<path d="M18 1V19L9 12.500H1.500V7.500H9Z" stroke="#fff" stroke-width="1.900"/>`, "ic fun")}<span class="vt vfil">Filters</span></div>
          </div>
          <div class="pages">
            <div class="mon">${ic(31, 22, svg`<rect x="1" y="1" width="28" height="14.500" stroke="#55534f" stroke-width="1.900"/><path d="M15 15.500V20M10 20.500H20" stroke="#55534f" stroke-width="2"/>`)}</div>
            ${ic(20, 30, svg`<rect x="1" y="1" width="17" height="28" rx="1.500" stroke="#55534f" stroke-width="1.900"/><path d="M8 25H11" stroke="#55534f" stroke-width="1.800"/>`, "ic phone")}
            <div class="arrows">${ic(7, 12, svg`<path d="M7 0V12L0 6Z" fill="#c8c6c4"/>`)}${ic(7, 12, svg`<path d="M0 0V12L7 6Z" fill="#c8c6c4"/>`)}</div>
            <div class="ptab">${t("Page 1", 53)}</div>
            <div class="plus">${ic(17, 17, svg`<path d="M8.500 0V17M0 8.500H17" stroke="#fff" stroke-width="4"/>`)}</div>
          </div>
        </div>
        <div class="pane vert">${dbl("#252423")}<span class="vt vis">Visualizations</span></div>
        <div class="pane vert">${dbl("#252423")}<span class="vt vis">Data</span></div>
      </div>
      <div class="status">
        ${t("Page 1 of 1", 88)}
        ${ic(8, 4, svg`<path d="M0 2H7" stroke="#55534f" stroke-width="1.900"/>`)}
        ${ic(151, 20, svg`<path d="M0 10H151" stroke="#605e5c" stroke-width="1.500"/><path d="M76 6V14" stroke="#605e5c" stroke-width="2"/><rect x="78" y="1.500" width="6" height="17" fill="#605e5c"/>`)}
        ${ic(13, 13, svg`<path d="M6.500 1V12M1 6.500H12" stroke="#55534f" stroke-width="1.900"/>`)}
        ${t("118%", 43)}
        ${ic(25, 20, svg`<rect x="1" y="1" width="23" height="17.500" stroke="#605e5c" stroke-width="1.700"/><path d="M4 8V4.500H9M16 4.500H21V8M21 12V15.500H16M9 15.500H4V12" stroke="#605e5c" stroke-width="1.700"/>`)}
      </div>
    `;
  }
}
